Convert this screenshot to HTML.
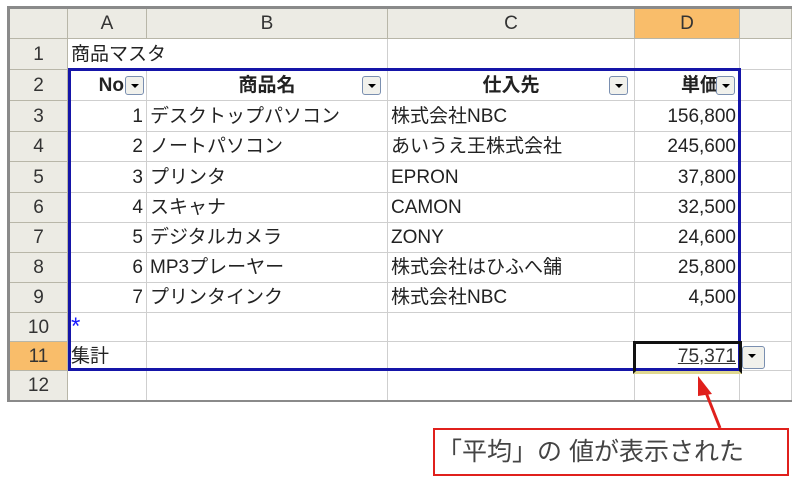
<!DOCTYPE html>
<html><head><meta charset="utf-8"><style>
body{margin:0;width:800px;height:482px;background:#fff;position:relative;overflow:hidden;font-family:"Liberation Sans","Noto Sans CJK JP",sans-serif;}
table{position:absolute;left:7px;top:6px;border-collapse:collapse;table-layout:fixed;border:3px solid #8a8a8a;border-right:none;border-bottom:2px solid #8a8a8a;}
td{border:1px solid #cfcfcf;padding:0 3px;font-size:19px;color:#222;white-space:nowrap;overflow:hidden;line-height:1;}
td.h{background:#ecebe4;text-align:center;color:#333;border-color:#b8b6a8;}
td.r{text-align:right}
td.c{text-align:center}
td.sel{background:#f9bd6a}
.btn{position:absolute;width:17px;height:17px;border:1px solid #7a8fb0;border-radius:3px;background:#f1f1ec;}
.btn:after{content:"";position:absolute;left:5px;top:7px;border-left:4px solid transparent;border-right:4px solid transparent;border-top:4px solid #000;}
</style></head><body>
<table>
<colgroup><col style="width:59px"><col style="width:79px"><col style="width:241px"><col style="width:247px"><col style="width:105px"><col style="width:52px"></colgroup>
<tr style="height:31px"><td class="h"></td><td class="h">A</td><td class="h">B</td><td class="h">C</td><td class="h sel">D</td><td class="h"></td></tr>
<tr style="height:31px"><td class="h">1</td><td colspan="2">商品マスタ</td><td></td><td></td><td></td></tr>
<tr style="height:31px"><td class="h">2</td><td class="r" style="font-weight:bold;padding-right:22px">No</td><td class="c" style="font-weight:bold">商品名</td><td class="c" style="font-weight:bold">仕入先</td><td class="r" style="font-weight:bold;padding-right:20px">単価</td><td></td></tr>
<tr style="height:31px"><td class="h">3</td><td class="r">1</td><td>デスクトップパソコン</td><td>株式会社NBC</td><td class="r">156,800</td><td></td></tr>
<tr style="height:30px"><td class="h">4</td><td class="r">2</td><td>ノートパソコン</td><td>あいうえ王株式会社</td><td class="r">245,600</td><td></td></tr>
<tr style="height:31px"><td class="h">5</td><td class="r">3</td><td>プリンタ</td><td>EPRON</td><td class="r">37,800</td><td></td></tr>
<tr style="height:30px"><td class="h">6</td><td class="r">4</td><td>スキャナ</td><td>CAMON</td><td class="r">32,500</td><td></td></tr>
<tr style="height:30px"><td class="h">7</td><td class="r">5</td><td>デジタルカメラ</td><td>ZONY</td><td class="r">24,600</td><td></td></tr>
<tr style="height:30px"><td class="h">8</td><td class="r">6</td><td>MP3プレーヤー</td><td>株式会社はひふへ舗</td><td class="r">25,800</td><td></td></tr>
<tr style="height:30px"><td class="h">9</td><td class="r">7</td><td>プリンタインク</td><td>株式会社NBC</td><td class="r">4,500</td><td></td></tr>
<tr style="height:29px"><td class="h">10</td><td style="color:#1a1aff;font-size:24px">*</td><td></td><td></td><td></td><td></td></tr>
<tr style="height:29px"><td class="h sel">11</td><td>集計</td><td></td><td></td><td class="r" style="text-decoration:underline;color:#333">75,371</td><td></td></tr>
<tr style="height:30px"><td class="h">12</td><td></td><td></td><td></td><td></td><td></td></tr>
</table>
<div style="position:absolute;left:68px;top:68px;width:667px;height:297px;border:3px solid #1515a8;"></div>
<div style="position:absolute;left:633px;top:341px;width:103px;height:27px;border:3px solid #111;border-bottom-color:#e0d890;"></div>
<div class="btn" style="left:125px;top:76px"></div>
<div class="btn" style="left:362px;top:76px"></div>
<div class="btn" style="left:609px;top:76px"></div>
<div class="btn" style="left:716px;top:76px"></div>
<div class="btn" style="left:742px;top:346px;width:21px;height:21px"></div>
<svg style="position:absolute;left:0;top:0" width="800" height="482">
<line x1="720" y1="428" x2="705" y2="390" stroke="#e0201c" stroke-width="3"/>
<polygon points="698,376 712,394 698,396" fill="#e0201c"/>
</svg>
<div style="position:absolute;left:433px;top:428px;width:350px;height:44px;border:2px solid #e0201c;font-size:25px;line-height:44px;color:#444;padding-left:2px;box-sizing:content-box;">「平均」の 値が表示された</div>
</body></html>
